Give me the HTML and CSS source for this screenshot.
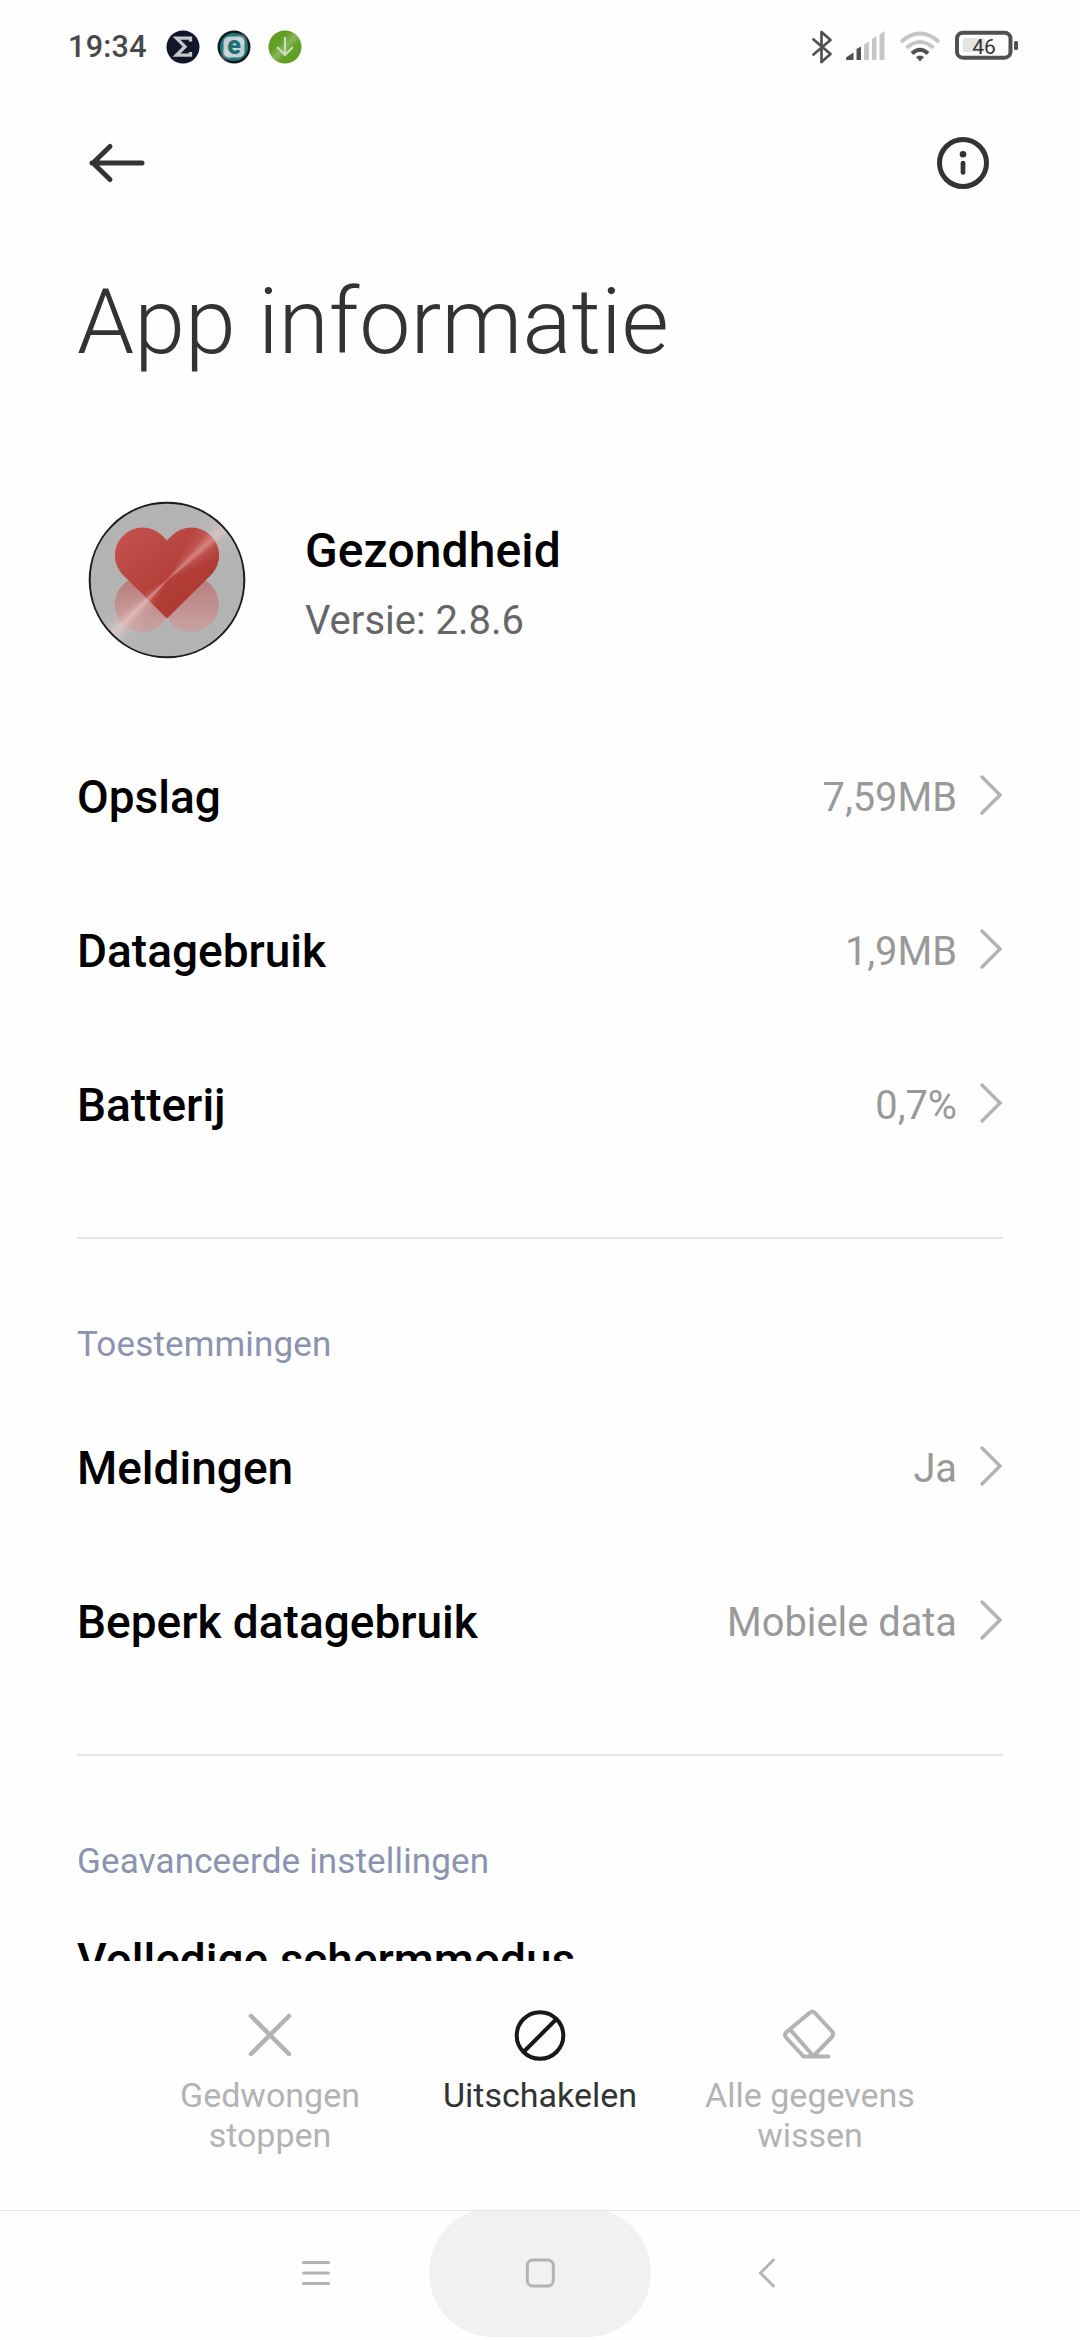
FILE: index.html
```html
<!DOCTYPE html>
<html lang="nl">
<head>
    <meta charset="UTF-8">
    <meta name="viewport" content="width=device-width, initial-scale=1.0">
    <title>App informatie</title>
    <link rel="stylesheet" href="styles.css">
</head>
<body>
    <div class="screen">
        <div class="statusbar">
            <span class="time">19:34</span>
            <svg class="notifications" width="140" height="34" viewBox="0 0 140 34">
                <defs>
                    <linearGradient id="glint" x1="0" y1="0" x2="1" y2="1">
                        <stop offset="0.35" stop-color="#fff" stop-opacity="0"/>
                        <stop offset="0.5" stop-color="#fff" stop-opacity="0.25"/>
                        <stop offset="0.65" stop-color="#fff" stop-opacity="0"/>
                    </linearGradient>
                </defs>
                <circle cx="17" cy="17" r="16.5" fill="#12162a"/>
                <path d="M24.500 11.500V8.200H10.500l8.500 8.500-8.500 8.500h14v-3.200" fill="none" stroke="#c9c9cc" stroke-width="3.300"/>
                <circle cx="68" cy="17" r="16.500" fill="#12191b"/>
                <circle cx="68" cy="17" r="14" fill="#23777f"/>
                <rect x="57.500" y="6.500" width="21" height="21" rx="6" fill="#c3cfd0"/>
                <circle cx="68" cy="17" r="16.500" fill="url(#glint)"/>
                <text class="badge-letter" x="68" y="23.500">e</text>
                <circle cx="119" cy="17" r="16.500" fill="#629f25"/>
                <circle cx="119" cy="17" r="16.500" fill="url(#glint)"/>
                <path d="M119 7v18M111 17l8 8 8-8" fill="none" stroke="#ccdcb9" stroke-width="2.200"/>
            </svg>
            <svg class="system" width="210" height="34" viewBox="0 0 210 34">
                <path d="M3.500 9.500l17 14.500L11.500 32V2l9 8-17 14.500" fill="none" stroke="#505050" stroke-width="2.700" stroke-linejoin="round" stroke-linecap="round"/>
                <g fill="#505050">
                    <path d="M36 29.500v-2l7.500-5v7.500h-7z"/>
                    <path d="M46.500 30v-11l4.500-2.500v13.500z"/>
                </g>
                <g fill="#c6c6c6">
                    <path d="M54 30v-15.500l5-3v18.500z"/>
                    <path d="M62 30v-21l4.500-3v24z"/>
                    <path d="M69.500 30v-25.500l5-3.500v29z"/>
                </g>
                <g fill="none" stroke-width="4">
                    <path d="M91 12Q110-5 129 12" stroke="#c6c6c6"/>
                    <path d="M96.500 18Q110 6 123.500 18" stroke="#c6c6c6"/>
                    <path d="M102 23.500Q110 16 118 23.500" stroke="#505050"/>
                </g>
                <path d="M106 27q4-3 8 0l-4 4.500z" fill="#505050"/>
                <rect x="147" y="2.700" width="53.500" height="25" rx="6" fill="none" stroke="#505050" stroke-width="4"/>
                <rect x="152.700" y="8" width="22" height="14" rx="2.500" fill="#e4e4e4"/>
                <rect x="204" y="11" width="4" height="9" rx="1.500" fill="#505050"/>
                <text class="battery-level" x="174" y="24.300">46</text>
            </svg>
        </div>

        <div class="toolbar">
            <svg width="60" height="60" viewBox="0 0 60 60">
                <path d="M55 30H5M23 13.500L6 30l17 16.500" fill="none" stroke="#333" stroke-width="5" stroke-linecap="round" stroke-linejoin="round"/>
            </svg>
            <svg width="60" height="60" viewBox="0 0 60 60">
                <circle cx="30" cy="30" r="23.500" fill="none" stroke="#333" stroke-width="5"/>
                <circle cx="30" cy="21.300" r="3.300" fill="#333"/>
                <path d="M30 30v9.500" stroke="#333" stroke-width="4.700" stroke-linecap="round"/>
            </svg>
        </div>

        <div class="content">
            <h1>App informatie</h1>

            <div class="app">
                <div class="app-icon">
                    <svg width="158" height="158" viewBox="0 0 158 158">
                        <defs>
                            <linearGradient id="heart" x1="0" y1="0" x2="1" y2="1">
                                <stop offset="0" stop-color="#c5534f"/>
                                <stop offset="0.700" stop-color="#b03a34"/>
                            </linearGradient>
                            <linearGradient id="shadow" x1="0" y1="0" x2="0" y2="1">
                                <stop offset="0" stop-color="#b97c7b"/>
                                <stop offset="1" stop-color="#c7a3a3"/>
                            </linearGradient>
                        </defs>
                        <circle cx="79" cy="79" r="77.300" fill="#b3b3b3" stroke="#1c1c1c" stroke-width="2"/>
                        <circle cx="54.200" cy="103.500" r="27.500" fill="url(#shadow)"/>
                        <circle cx="103.500" cy="103.500" r="27.500" fill="url(#shadow)"/>
                        <path d="M79 117.500L34.500 73.500A27.800 27.800 0 0 1 73.800 34.200L79 39.500L84.200 34.200A27.800 27.800 0 0 1 123.500 73.500Z" fill="url(#heart)"/>
                    </svg>
                    <div class="shine"></div>
                </div>
                <div class="app-text">
                    <div class="app-name">Gezondheid</div>
                    <div class="app-version">Versie: 2.8.6</div>
                </div>
            </div>

            <div class="group">
                <div class="row">
                    <span class="label">Opslag</span>
                    <span class="value">7,59MB</span>
                    <svg class="chevron" width="24" height="42" viewBox="0 0 24 42"><path d="M3 3l18 18L3 39"/></svg>
                </div>
                <div class="row">
                    <span class="label">Datagebruik</span>
                    <span class="value">1,9MB</span>
                    <svg class="chevron" width="24" height="42" viewBox="0 0 24 42"><path d="M3 3l18 18L3 39"/></svg>
                </div>
                <div class="row">
                    <span class="label">Batterij</span>
                    <span class="value">0,7%</span>
                    <svg class="chevron" width="24" height="42" viewBox="0 0 24 42"><path d="M3 3l18 18L3 39"/></svg>
                </div>
            </div>

            <div class="group">
                <h2>Toestemmingen</h2>
                <div class="row">
                    <span class="label">Meldingen</span>
                    <span class="value">Ja</span>
                    <svg class="chevron" width="24" height="42" viewBox="0 0 24 42"><path d="M3 3l18 18L3 39"/></svg>
                </div>
                <div class="row">
                    <span class="label">Beperk datagebruik</span>
                    <span class="value">Mobiele data</span>
                    <svg class="chevron" width="24" height="42" viewBox="0 0 24 42"><path d="M3 3l18 18L3 39"/></svg>
                </div>
            </div>

            <div class="group">
                <h2>Geavanceerde instellingen</h2>
                <div class="row tall">
                    <span class="label">Volledige schermmodus</span>
                </div>
            </div>
        </div>

        <div class="actions">
            <div class="action disabled">
                <svg width="60" height="60" viewBox="0 0 60 60">
                    <path d="M11 11l38 38M49 11L11 49" fill="none" stroke="#b3b3b3" stroke-width="4.500" stroke-linecap="round"/>
                </svg>
                <span>Gedwongen<br>stoppen</span>
            </div>
            <div class="action">
                <svg width="60" height="60" viewBox="0 0 60 60">
                    <circle cx="30" cy="30.500" r="23.300" fill="none" stroke="#181818" stroke-width="4"/>
                    <path d="M14 46.500l32-32" stroke="#181818" stroke-width="4"/>
                </svg>
                <span>Uitschakelen</span>
            </div>
            <div class="action disabled">
                <svg width="60" height="60" viewBox="0 0 60 60">
                    <path d="M34.500 7.500L52 26.500q2 2.700 0 5.500L33 51.500H23.500L6 32.500q-2-2.500 0-5L30 7.500q2.300-2 4.500 0zM10.500 25l22 25M23.500 51.500h25" fill="none" stroke="#b3b3b3" stroke-width="4" stroke-linecap="round" stroke-linejoin="round"/>
                </svg>
                <span>Alle gegevens<br>wissen</span>
            </div>
        </div>

        <div class="navbar">
            <div class="nav-button">
                <svg width="34" height="30" viewBox="0 0 34 30">
                    <path d="M2.500 4.500h25M2.500 15h25M2.500 25.500h25"/>
                </svg>
            </div>
            <div class="nav-button pressed">
                <svg width="30" height="30" viewBox="0 0 30 30">
                    <rect x="2.300" y="2" width="26" height="26" rx="5.500"/>
                </svg>
            </div>
            <div class="nav-button">
                <svg width="30" height="30" viewBox="0 0 30 30">
                    <path d="M26.500 2L13.500 15l13 13"/>
                </svg>
            </div>
        </div>
    </div>
</body>
</html>
```
FILE: styles.css
```css
body {
    margin: 0;
    background-color: #fefefe;
    font-family: Roboto, "Noto Sans", sans-serif;
}

.screen {
    width: 1080px;
    height: 2340px;
    display: flex;
    flex-direction: column;
    overflow: hidden;
}

.statusbar {
    display: flex;
    align-items: center;
    height: 93px;
    padding: 0 60px 0 68px;
    flex-shrink: 0;
}

.time {
    width: 97.5px;
    font-size: 30.5px;
    font-weight: 500;
    color: #484848;
    letter-spacing: 0.3px;
}

.system {
    margin-left: auto;
}

.badge-letter {
    font-size: 25px;
    font-weight: 900;
    fill: #1f6f77;
    text-anchor: middle;
}

.battery-level {
    font-size: 21px;
    fill: #333;
    text-anchor: middle;
}

.toolbar {
    display: flex;
    justify-content: space-between;
    align-items: center;
    height: 140px;
    padding: 0 87px;
    flex-shrink: 0;
}

.content {
    height: 1728px;
    padding: 0 77px;
    overflow: hidden;
    flex-shrink: 0;
}

h1 {
    margin: 35px 0 0;
    font-size: 91.5px;
    font-weight: 300;
    line-height: 108px;
    color: #333;
}

.app {
    display: flex;
    align-items: center;
    height: 158px;
    margin: 125px 0 61px;
    padding-left: 11px;
}

.app-icon {
    position: relative;
    width: 158px;
    height: 158px;
}

/* brushed light beam, narrow in the middle and wider at the rim */
.shine {
    position: absolute;
    top: 3px;
    left: 3px;
    width: 152px;
    height: 152px;
    border-radius: 50%;
    background: conic-gradient(
        rgba(255, 215, 215, 0) 28deg,
        rgba(255, 215, 215, 0.12) 40deg,
        rgba(255, 215, 215, 0.45) 48deg,
        rgba(255, 215, 215, 0.1) 55deg,
        rgba(255, 215, 215, 0) 68deg,
        rgba(255, 215, 215, 0) 205deg,
        rgba(255, 215, 215, 0.12) 217deg,
        rgba(255, 215, 215, 0.5) 225deg,
        rgba(255, 215, 215, 0.1) 233deg,
        rgba(255, 215, 215, 0) 245deg);
}

.app-text {
    margin-left: 59px;
    padding-top: 9px;
}

.app-name {
    font-size: 48px;
    font-weight: 500;
    line-height: 60px;
    letter-spacing: 0.1px;
    color: #000;
}

.app-version {
    margin-top: 12px;
    font-size: 40px;
    line-height: 56px;
    color: #666;
}

.group {
    padding-bottom: 55px;
    border-bottom: 2px solid #e5e5e5;
}

h2 {
    box-sizing: border-box;
    height: 152px;
    margin: 0;
    padding-top: 85px;
    font-size: 35px;
    font-weight: 400;
    line-height: 41px;
    letter-spacing: 0.15px;
    color: #8c93b0;
}

.row {
    display: flex;
    align-items: center;
    height: 154px;
}

.row.tall {
    align-items: flex-start;
    padding-top: 25px;
}

.label {
    font-size: 46px;
    font-weight: 500;
    color: #000;
}

.value {
    margin-left: auto;
    font-size: 39.8px;
    color: #999;
}

.chevron {
    margin-left: 22px;
    margin-top: -4px;
}

.chevron path {
    fill: none;
    stroke: #b3b3b3;
    stroke-width: 3.5;
    stroke-linecap: round;
}

.actions {
    display: flex;
    justify-content: center;
    height: 249px;
    flex-shrink: 0;
}

.action {
    display: flex;
    flex-direction: column;
    align-items: center;
    width: 270px;
    padding-top: 44px;
    font-size: 34px;
    line-height: 40px;
    text-align: center;
    color: #333;
}

.action span {
    margin-top: 10px;
}

.action.disabled {
    color: #b3b3b3;
}

.navbar {
    display: flex;
    justify-content: center;
    height: 129px;
    border-top: 1px solid #e4e4e4;
    overflow: hidden;
}

.nav-button {
    display: flex;
    justify-content: center;
    align-items: center;
    width: 222px;
    height: 129px;
    margin-top: -3px;
}

.nav-button.pressed {
    background-color: #f1f1f1;
    border-radius: 64px;
}

.nav-button svg {
    fill: none;
    stroke: #b3b3b3;
    stroke-width: 3;
    stroke-linecap: round;
}
```
